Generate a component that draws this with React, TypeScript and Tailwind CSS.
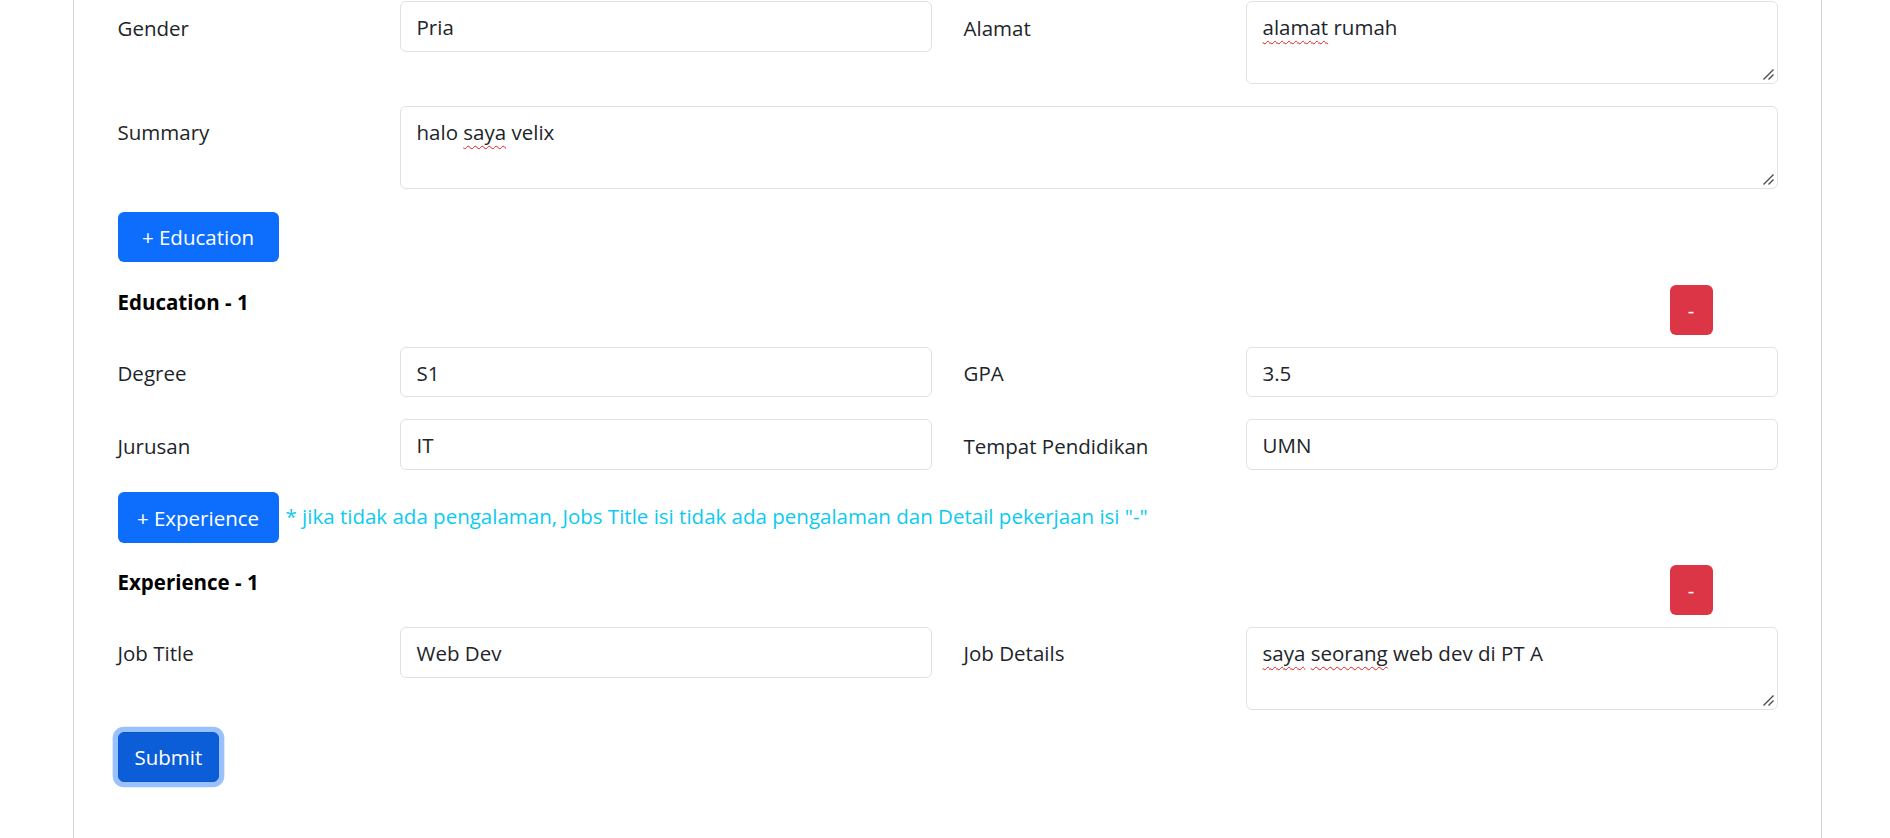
import React from 'react';

const font = { fontFamily: '"Open Sans", "Noto Sans", sans-serif' };

function Label({ children }: { children: React.ReactNode }) {
  return <div className="pt-[10.5px] leading-[32px] text-[#212529]">{children}</div>;
}

function Input({ value }: { value: string }) {
  return (
    <div className="h-[50.67px] rounded-[6px] border-[1.33px] border-[#dee2e6] bg-white px-[16px] pt-[9px] leading-[32px] text-[#212529]">
      {value}
    </div>
  );
}

function Grip() {
  return (
    <svg className="absolute right-[3px] bottom-[3px]" width="12" height="12" viewBox="0 0 12 12">
      <path d="M1.5 11.5 L11.5 1.5 M6.5 11.5 L11.5 6.5" stroke="#4b4b4b" strokeWidth="1.4" />
    </svg>
  );
}

function TextArea({ children }: { children: React.ReactNode }) {
  return (
    <div className="relative h-[83px] rounded-[6px] border-[1.33px] border-[#dee2e6] bg-white px-[16px] pt-[9px] leading-[32px] text-[#212529]">
      {children}
      <Grip />
    </div>
  );
}

function Typo({ children }: { children: React.ReactNode }) {
  return (
    <span className="underline decoration-wavy decoration-[#e0201f] decoration-[1px] underline-offset-[5px]">
      {children}
    </span>
  );
}

function SectionHeader({ title }: { title: string }) {
  return (
    <div className="flex items-start h-[50.67px]">
      <div className="w-[1552px] pt-[1.5px] leading-[32px] font-bold text-[#000]">{title}</div>
      <button className="h-[50.67px] w-[43px] rounded-[6px] bg-[#dc3545] text-white leading-[32px]">-</button>
    </div>
  );
}

export default function App() {
  return (
    <div className="h-[838px] w-full overflow-hidden bg-white text-[20.5px]" style={font}>
      <div className="ml-[73px] h-full w-[1749px] border-x border-[#d3d3d3] pl-[43.5px] pr-[43px] pt-[1.3px]">
        <div className="grid grid-cols-[250px_532px_250px_532px] gap-x-[32px] items-start">
          <Label>Gender</Label>
          <Input value="Pria" />
          <Label>Alamat</Label>
          <TextArea>
            <Typo>alamat</Typo> rumah
          </TextArea>
        </div>

        <div className="mt-[21.33px] grid grid-cols-[250px_1fr] gap-x-[32px] items-start">
          <Label>Summary</Label>
          <TextArea>
            halo <Typo>saya</Typo> velix
          </TextArea>
        </div>

        <button className="mt-[23px] h-[50.67px] w-[161px] rounded-[6px] bg-[#0d6efd] text-white leading-[32px]">
          + Education
        </button>

        <div className="mt-[22.3px]">
          <SectionHeader title="Education - 1" />
        </div>

        <div className="mt-[11.6px] grid grid-cols-[250px_532px_250px_532px] gap-x-[32px] gap-y-[22px] items-start">
          <Label>Degree</Label>
          <Input value="S1" />
          <Label>GPA</Label>
          <Input value="3.5" />
          <Label>Jurusan</Label>
          <Input value="IT" />
          <Label>Tempat Pendidikan</Label>
          <Input value="UMN" />
        </div>

        <div className="mt-[21.7px] flex items-center">
          <button className="h-[51.5px] w-[161px] rounded-[6px] bg-[#0d6efd] pt-[1px] text-white leading-[32px]">
            + Experience
          </button>
          <span className="ml-[7px] -mt-[3px] text-[#0dcaf0] leading-[32px]">
            * jika tidak ada pengalaman, Jobs Title isi tidak ada pengalaman dan Detail pekerjaan isi "-"
          </span>
        </div>

        <div className="mt-[21.3px]">
          <SectionHeader title="Experience - 1" />
        </div>

        <div className="mt-[11.6px] grid grid-cols-[250px_532px_250px_532px] gap-x-[32px] items-start">
          <Label>Job Title</Label>
          <Input value="Web Dev" />
          <Label>Job Details</Label>
          <TextArea>
            <Typo>saya</Typo> <Typo>seorang</Typo> web dev di PT A
          </TextArea>
        </div>

        <button className="mt-[21.7px] h-[50.67px] rounded-[6px] border-[1.33px] border-[#0a58ca] bg-[#0b5ed7] px-[16px] text-white leading-[32px] shadow-[0_0_0_5.33px_rgba(49,132,253,0.5)]">
          Submit
        </button>
      </div>
    </div>
  );
}
